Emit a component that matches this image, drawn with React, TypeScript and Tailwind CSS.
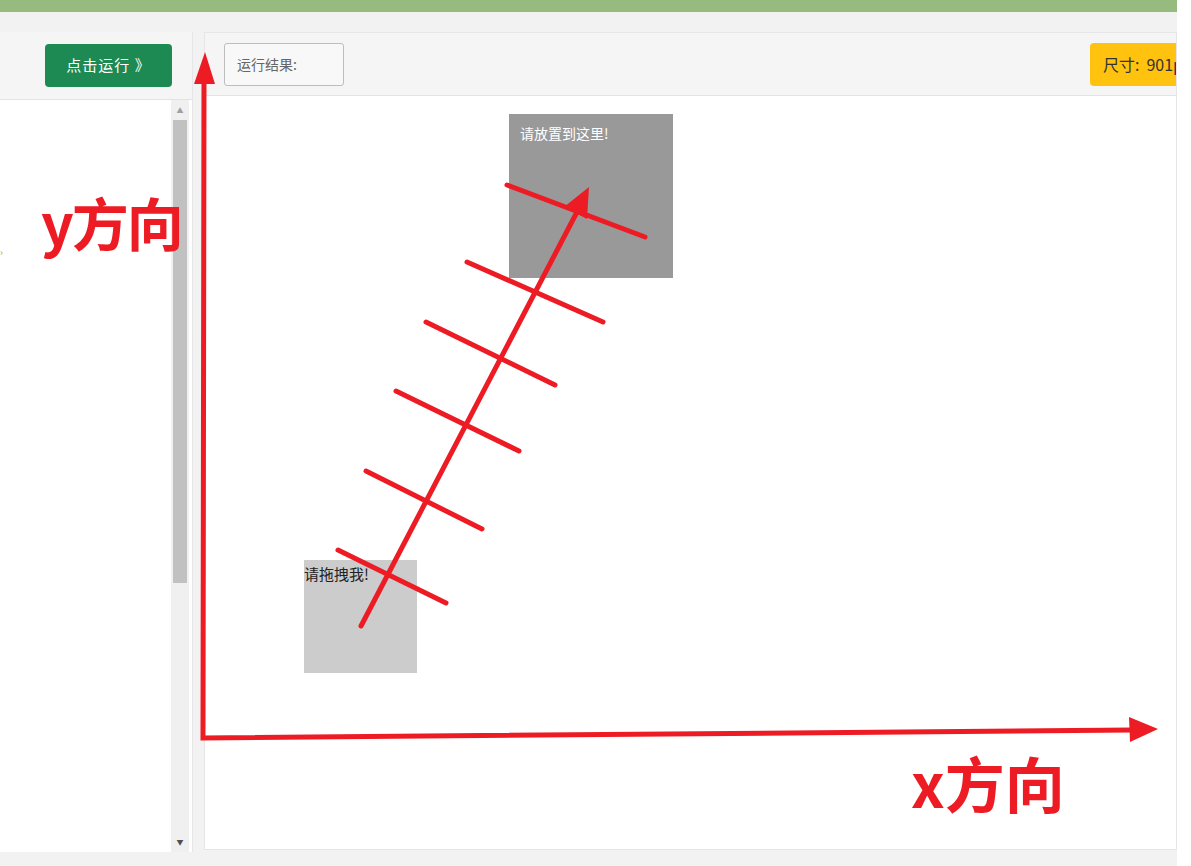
export default function App() {
  return (
    <div
      className="relative w-[1191px] h-[866px] overflow-hidden bg-white"
      style={{ fontFamily: '"Noto Sans CJK SC", "Noto Sans", sans-serif' }}
    >
      <div className="w-[1177px] h-full bg-[#f2f2f2] flex flex-col">
        {/* top bar */}
        <div className="h-[12px] bg-[#97bb7e] shrink-0" />

        <div className="flex gap-[11px] pt-[20px] flex-1 min-h-0">
          {/* Left: editor panel */}
          <div className="w-[193px] h-[820px] flex flex-col border-r border-[#e6e6e6] relative">
            <div className="h-[68px] bg-[#f5f5f5] border-b border-[#e3e3e3] flex items-center justify-end pr-[20px]">
              <button className="h-[43px] w-[127px] rounded-[4px] bg-[#1c8a52] text-white text-[15px] tracking-[1px]">
                点击运行 》
              </button>
            </div>
            <div className="flex-1 bg-white flex">
              <div className="flex-1 relative">
                <span className="absolute left-0 top-[148px] text-[#6cb04a] text-[9px] leading-none">›</span>
              </div>
              <div className="w-[18px] bg-[#f0f0f0] flex flex-col items-center mr-[3px]">
                <div className="h-[20px] flex items-center justify-center text-[#a0a0a0] text-[7px]">▲</div>
                <div className="w-[14px] h-[463px] bg-[#c1c1c1]" />
                <div className="flex-1" />
                <div className="h-[20px] flex items-center justify-center text-[#505050] text-[7px]">▼</div>
              </div>
            </div>
          </div>

          {/* Right: result panel */}
          <div className="w-[973px] h-[818px] flex flex-col border border-[#e6e6e6] overflow-hidden bg-white">
            <div className="h-[63px] bg-[#f5f5f5] border-b border-[#e3e3e3] flex items-center justify-between pl-[19px] shrink-0">
              <div className="h-[43px] w-[120px] border border-[#bdbdbd] rounded-[3px] bg-[#f8f8f8] flex items-center pl-[12px] text-[14px] text-[#666]">
                运行结果:
              </div>
              <div className="h-[43px] w-[130px] mr-[-44px] rounded-[4px] bg-[#ffc20e] flex items-center pl-[13px] text-[16px] text-[#333] whitespace-nowrap">
                尺寸:<span className="ml-[7px]">901px</span>
              </div>
            </div>
            <div className="relative flex-1 bg-white">
              <div className="absolute left-[304px] top-[18px] w-[164px] h-[164px] bg-[#999999] px-[11px] pt-[12px] text-[14px] text-white leading-none">
                请放置到这里!
              </div>
              <div className="absolute left-[99px] top-[464px] w-[113px] h-[113px] bg-[#cccccc] text-[15px] text-[#222] leading-none pt-[6px]">
                请拖拽我!
              </div>
            </div>
          </div>
        </div>
      </div>

      {/* annotation overlay */}
      <svg className="absolute inset-0 pointer-events-none" width="1191" height="866" viewBox="0 0 1191 866">
        <g stroke="#ed1c24" strokeWidth="5" strokeLinecap="round" fill="none">
          <polyline points="204,78 203,738 1132,730" strokeLinejoin="miter" strokeLinecap="butt" />
          <line x1="361" y1="626" x2="577" y2="212" />
          <line x1="507" y1="185" x2="645" y2="237" />
          <line x1="467" y1="262" x2="603" y2="322" />
          <line x1="426" y1="322" x2="555" y2="385" />
          <line x1="396" y1="391" x2="519" y2="451" />
          <line x1="366" y1="471" x2="482" y2="529" />
          <line x1="338" y1="550" x2="446" y2="603" />
        </g>
        <g fill="#ed1c24">
          <polygon points="205,52 194,84 215,84" />
          <polygon points="1158,729 1129,717 1130,742" />
          <polygon points="589,187 564,207 587,219" />
        </g>
      </svg>
      <div className="absolute left-[41px] top-[193px] text-[#ed1c24] text-[57px] font-bold leading-none tracking-[-2px]">
        y方向
      </div>
      <div className="absolute left-[911px] top-[752px] text-[#ed1c24] text-[60px] font-bold leading-none">
        x方向
      </div>
    </div>
  )
}
